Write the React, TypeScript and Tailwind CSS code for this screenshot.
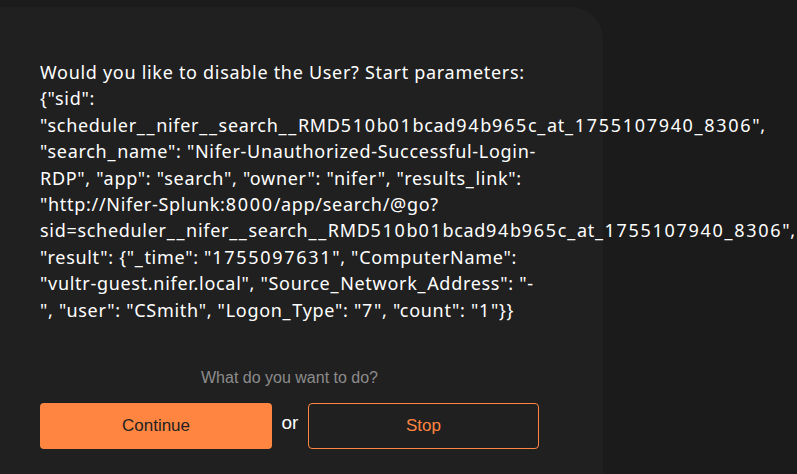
import React from 'react';

const lines = [
  'Would you like to disable the User? Start parameters:',
  '{"sid":',
  '"scheduler__nifer__search__RMD510b01bcad94b965c_at_1755107940_8306",',
  '"search_name": "Nifer-Unauthorized-Successful-Login-',
  'RDP", "app": "search", "owner": "nifer", "results_link":',
  '"http://Nifer-Splunk:8000/app/search/@go?',
  'sid=scheduler__nifer__search__RMD510b01bcad94b965c_at_1755107940_8306",',
  '"result": {"_time": "1755097631", "ComputerName":',
  '"vultr-guest.nifer.local", "Source_Network_Address": "-',
  '", "user": "CSmith", "Logon_Type": "7", "count": "1"}}',
];

// digits and underscores run wider in the original face
function Line({ text }: { text: string }) {
  const parts = text.split(/([0-9_]+)/);
  return (
    <div>
      {parts.map((p, i) =>
        i % 2 === 1 ? (
          <span key={i} className="tracking-[1.7px]">
            {p}
          </span>
        ) : (
          <React.Fragment key={i}>{p}</React.Fragment>
        )
      )}
    </div>
  );
}

export default function App() {
  return (
    <div className="h-[474px] w-[797px] overflow-hidden bg-[#1b1b1b] pt-[7px]">
      <div className="h-[467px] w-[603px] rounded-tr-[32px] bg-[#202020] pl-[40px] pt-[52px]">
        <div className="w-[499px] whitespace-nowrap text-[18px] leading-[26.4px] tracking-[0.7px] text-white font-['Noto_Sans','Open_Sans',sans-serif]">
          {lines.map((l, i) => (
            <Line key={i} text={l} />
          ))}
        </div>

        <div className="mt-[43px] w-[499px] font-['Liberation_Sans',Arial,sans-serif]">
          <p className="text-center text-[16px] text-[#8c8c8c]">What do you want to do?</p>
          <div className="mt-[13px] flex items-center">
            <button className="h-[46px] w-[232px] rounded-[4px] bg-[#ff8541] text-[17px] text-[#222]">
              Continue
            </button>
            <span className="mx-auto -mt-[6px] text-[19px] font-medium text-white">or</span>
            <button className="h-[46px] w-[231px] rounded-[4px] border border-[#ff8541] text-[17px] text-[#ff8541]">
              Stop
            </button>
          </div>
        </div>
      </div>
    </div>
  );
}
